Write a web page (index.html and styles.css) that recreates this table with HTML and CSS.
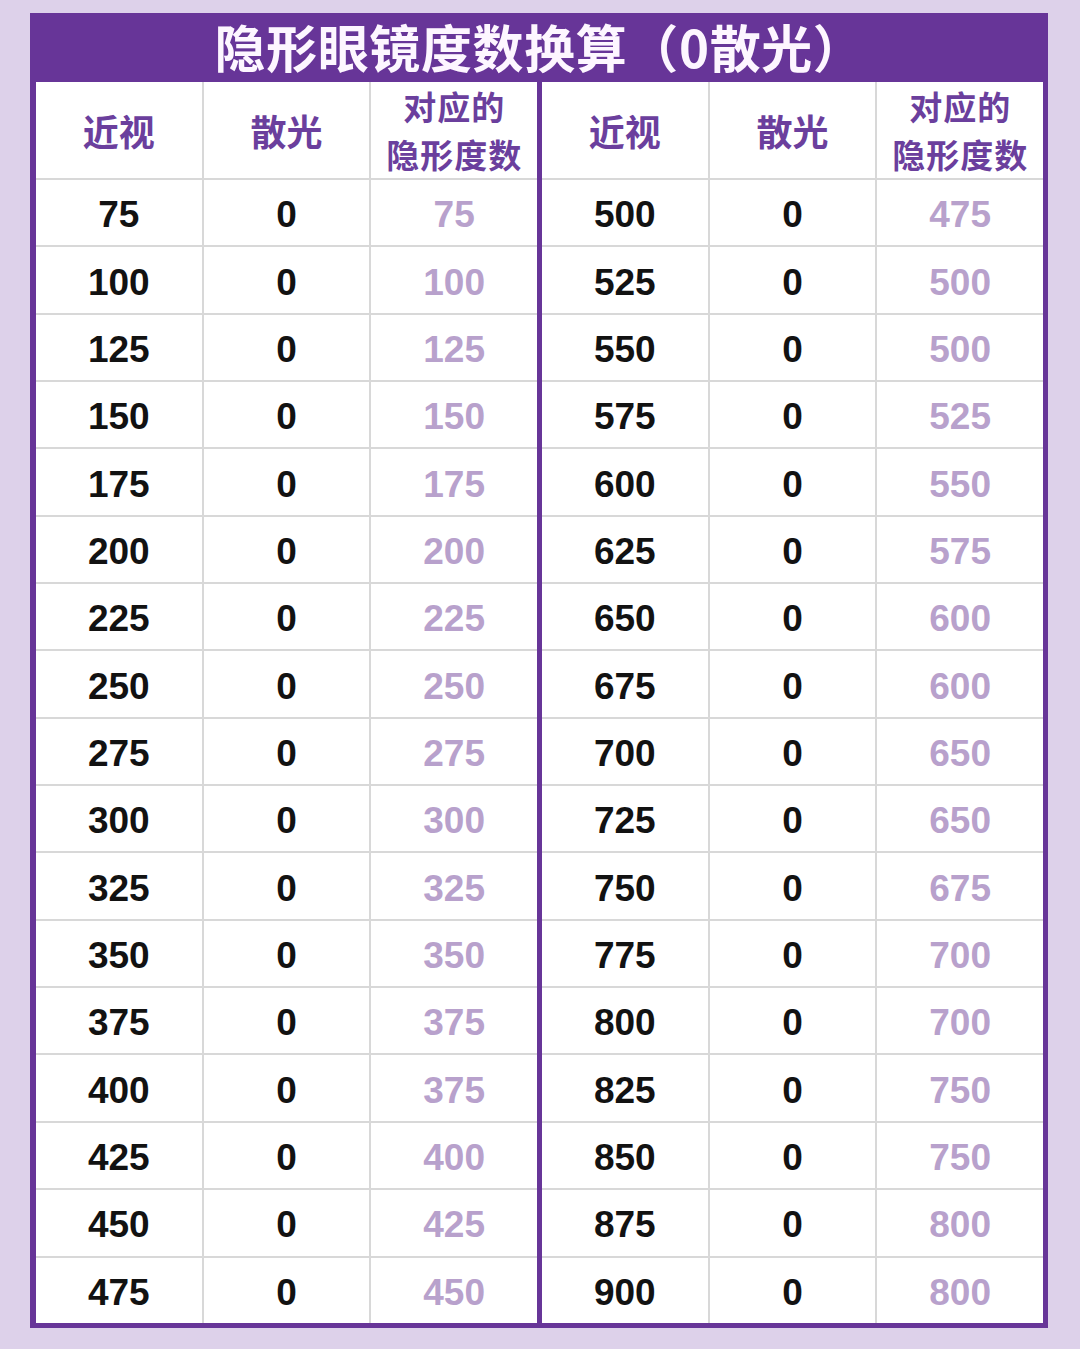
FILE: index.html
```html
<!DOCTYPE html>
<html lang="zh-CN">
<head>
<meta charset="utf-8">
<title>隐形眼镜度数换算</title>
<link rel="stylesheet" href="styles.css">
</head>
<body>
<div class="sheet">
  <div class="title">隐形眼镜度数换算（0散光）</div>
  <div class="halves">
    <div class="half">
      <div class="hd">近视</div><div class="hd">散光</div><div class="hd two"><span class="ln">对应的</span><span class="ln">隐形度数</span></div>
      <div class="c">75</div><div class="c">0</div><div class="c l">75</div>
      <div class="c">100</div><div class="c">0</div><div class="c l">100</div>
      <div class="c">125</div><div class="c">0</div><div class="c l">125</div>
      <div class="c">150</div><div class="c">0</div><div class="c l">150</div>
      <div class="c">175</div><div class="c">0</div><div class="c l">175</div>
      <div class="c">200</div><div class="c">0</div><div class="c l">200</div>
      <div class="c">225</div><div class="c">0</div><div class="c l">225</div>
      <div class="c">250</div><div class="c">0</div><div class="c l">250</div>
      <div class="c">275</div><div class="c">0</div><div class="c l">275</div>
      <div class="c">300</div><div class="c">0</div><div class="c l">300</div>
      <div class="c">325</div><div class="c">0</div><div class="c l">325</div>
      <div class="c">350</div><div class="c">0</div><div class="c l">350</div>
      <div class="c">375</div><div class="c">0</div><div class="c l">375</div>
      <div class="c">400</div><div class="c">0</div><div class="c l">375</div>
      <div class="c">425</div><div class="c">0</div><div class="c l">400</div>
      <div class="c">450</div><div class="c">0</div><div class="c l">425</div>
      <div class="c">475</div><div class="c">0</div><div class="c l">450</div>
    </div>
    <div class="half">
      <div class="hd">近视</div><div class="hd">散光</div><div class="hd two"><span class="ln">对应的</span><span class="ln">隐形度数</span></div>
      <div class="c">500</div><div class="c">0</div><div class="c l">475</div>
      <div class="c">525</div><div class="c">0</div><div class="c l">500</div>
      <div class="c">550</div><div class="c">0</div><div class="c l">500</div>
      <div class="c">575</div><div class="c">0</div><div class="c l">525</div>
      <div class="c">600</div><div class="c">0</div><div class="c l">550</div>
      <div class="c">625</div><div class="c">0</div><div class="c l">575</div>
      <div class="c">650</div><div class="c">0</div><div class="c l">600</div>
      <div class="c">675</div><div class="c">0</div><div class="c l">600</div>
      <div class="c">700</div><div class="c">0</div><div class="c l">650</div>
      <div class="c">725</div><div class="c">0</div><div class="c l">650</div>
      <div class="c">750</div><div class="c">0</div><div class="c l">675</div>
      <div class="c">775</div><div class="c">0</div><div class="c l">700</div>
      <div class="c">800</div><div class="c">0</div><div class="c l">700</div>
      <div class="c">825</div><div class="c">0</div><div class="c l">750</div>
      <div class="c">850</div><div class="c">0</div><div class="c l">750</div>
      <div class="c">875</div><div class="c">0</div><div class="c l">800</div>
      <div class="c">900</div><div class="c">0</div><div class="c l">800</div>
    </div>
  </div>
</div>
</body>
</html>
```
FILE: styles.css
```css
html, body {
  margin: 0;
  padding: 0;
  background: #ddd1ea;
}
body {
  width: 1080px;
  height: 1349px;
  overflow: hidden;
  padding-top: 13px;
  box-sizing: border-box;
}
.sheet {
  margin-left: 30px;
  width: 1018px;
  background: #673598;
  padding: 0 5px 5px 6px;
  box-sizing: border-box;
}
.title {
  height: 69px;
  line-height: 67px;
  text-align: center;
  color: #fdf6ff;
  font-family: "Noto Sans CJK SC", "Noto Sans", sans-serif;
  font-weight: 700;
  font-size: 51px;
  letter-spacing: 0.6px;
}
.halves {
  display: flex;
  gap: 5px;
}
.half {
  flex: 1;
  display: grid;
  grid-template-columns: 1fr 1fr 1fr;
  grid-template-rows: 96px repeat(17, 65.35px);
  gap: 2px;
  background: #d8d8d8;
}
.hd {
  background: #fff;
  display: flex;
  align-items: center;
  justify-content: center;
  text-align: center;
  color: #6b3f9d;
  font-family: "Noto Sans CJK SC", "Noto Sans", sans-serif;
  font-weight: 700;
  font-size: 36px;
  line-height: 45px;
}
.hd.two {
  flex-direction: column;
  font-size: 33px;
  letter-spacing: 1px;
}
.ln {
  display: block;
  height: 48px;
  line-height: 48px;
}
.c {
  background: #fff;
  display: flex;
  align-items: center;
  justify-content: center;
  font-family: "Liberation Sans", Arial, sans-serif;
  font-weight: 700;
  font-size: 37px;
  color: #121212;
  padding-top: 5px;
  box-sizing: border-box;
}
.c.l {
  color: #b8a1cc;
}
```
